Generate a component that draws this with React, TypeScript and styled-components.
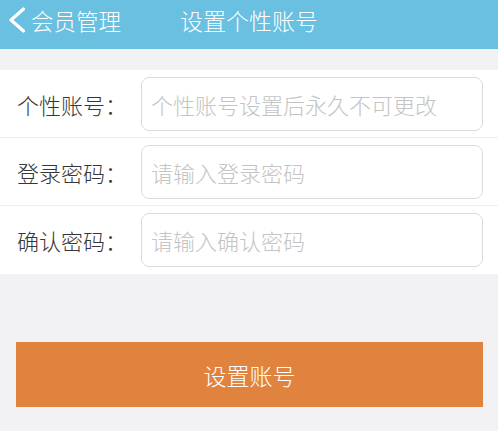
import React from "react";
import styled, { createGlobalStyle } from "styled-components";

const GlobalStyle = createGlobalStyle`
  html, body {
    margin: 0;
    padding: 0;
    background: #f2f2f4;
    font-family: "Noto Sans CJK SC", "Noto Sans", sans-serif;
  }
  * { box-sizing: border-box; }
`;

const Page = styled.div`
  width: 498px;
  min-height: 431px;
  background: #f2f2f4;
  font-weight: 300;
`;

const Header = styled.header`
  height: 49px;
  background: #69c0e0;
  display: grid;
  grid-template-columns: 1fr auto 1fr;
  align-items: center;
  padding: 0 8px 9px 8px;
  color: #fff;
`;

const Back = styled.div`
  display: flex;
  align-items: center;
  gap: 4px;
  font-size: 22.5px;
  line-height: 1;
`;

const Title = styled.div`
  font-size: 23px;
  line-height: 1;
`;

const Form = styled.div`
  margin-top: 21px;
  background: #fff;
`;

const Row = styled.div<{ $last?: boolean }>`
  height: 68px;
  display: flex;
  align-items: center;
  padding: 0 15px 0 17px;
  border-bottom: ${(p) => (p.$last ? "none" : "1px solid #eeeef0")};
`;

const Label = styled.label`
  width: 124px;
  flex: none;
  font-size: 22px;
  color: #363636;
  line-height: 1;
`;

const Input = styled.input`
  flex: 1;
  height: 54px;
  border: 1px solid #dcdcdc;
  border-radius: 8px;
  padding: 0 9px;
  font-family: "Noto Sans CJK SC", "Noto Sans", sans-serif;
  font-weight: 300;
  font-size: 22px;
  color: #333;
  outline: none;
  &::placeholder {
    color: #c4c4c4;
  }
`;

const Button = styled.button`
  display: flex;
  align-items: center;
  justify-content: center;
  margin: 68px 15px 0 16px;
  width: calc(100% - 31px);
  height: 65px;
  border: none;
  background: #e0833f;
  color: #fff;
  font-family: "Noto Sans CJK SC", "Noto Sans", sans-serif;
  font-weight: 300;
  font-size: 23px;
  padding: 0;
`;

const fields = [
  { label: "个性账号：", placeholder: "个性账号设置后永久不可更改", type: "text" },
  { label: "登录密码：", placeholder: "请输入登录密码", type: "password" },
  { label: "确认密码：", placeholder: "请输入确认密码", type: "password" },
];

export default function App() {
  return (
    <Page>
      <GlobalStyle />
      <Header>
        <Back>
          <svg width="19" height="26" viewBox="0 0 19 26" fill="none">
            <path
              d="M15.5 2 L3 13 L15.5 24"
              stroke="#fff"
              strokeWidth="3.2"
              strokeLinecap="round"
              strokeLinejoin="round"
            />
          </svg>
          <span>会员管理</span>
        </Back>
        <Title>设置个性账号</Title>
        <div />
      </Header>
      <Form>
        {fields.map((f, i) => (
          <Row key={f.label} $last={i === fields.length - 1}>
            <Label>{f.label}</Label>
            <Input type={f.type} placeholder={f.placeholder} />
          </Row>
        ))}
      </Form>
      <Button>设置账号</Button>
    </Page>
  );
}
